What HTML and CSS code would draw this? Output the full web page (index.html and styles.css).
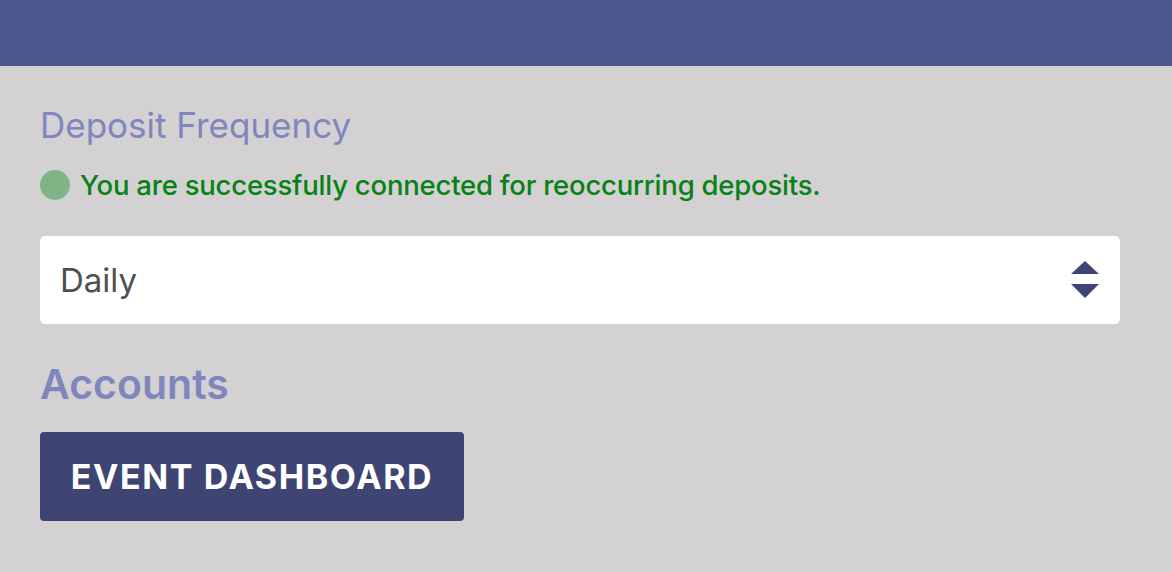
FILE: index.html
```html
<!DOCTYPE html>
<html>
<head>
<meta charset="utf-8">
<link rel="stylesheet" href="styles.css">
</head>
<body>
<header class="topbar"></header>
<main class="content">
  <h2 class="label">Deposit Frequency</h2>
  <p class="status"><span class="dot"></span>You are successfully connected for reoccurring deposits.</p>
  <div class="select">
    <span class="select-value">Daily</span>
    <svg class="arrows" width="30" height="38" viewBox="0 0 30 38">
      <polygon points="15,0 29,13 1,13" fill="#3e4574"/>
      <polygon points="1,23 29,23 15,37" fill="#3e4574"/>
    </svg>
  </div>
  <h2 class="heading">Accounts</h2>
  <button class="btn">EVENT DASHBOARD</button>
</main>
</body>
</html>
```
FILE: styles.css
```css
html, body { margin: 0; padding: 0; }
body {
  background: #d3d1d2;
  font-family: Inter, "Liberation Sans", sans-serif;
  width: 1172px;
  height: 572px;
  overflow: hidden;
}
.topbar {
  height: 66px;
  background: #4f578f;
}
.content {
  padding: 38px 52px 0 40px;
  display: flex;
  flex-direction: column;
  align-items: flex-start;
}
.label {
  margin: 0;
  font-weight: 400;
  font-size: 35px;
  line-height: 42px;
  color: #7f86bd;
}
.status {
  margin: 23px 0 0;
  display: flex;
  align-items: center;
  font-size: 27.5px;
  font-weight: 500;
  letter-spacing: -0.22px;
  line-height: 32px;
  color: #0a8116;
}
.dot {
  width: 30px;
  height: 30px;
  border-radius: 50%;
  background: #80b486;
  margin-right: 10px;
}
.select {
  margin-top: 35px;
  align-self: stretch;
  height: 88px;
  background: #fff;
  border-radius: 5px;
  display: flex;
  align-items: center;
  justify-content: space-between;
  padding: 0 20px;
  box-sizing: border-box;
}
.select-value {
  font-size: 33px;
  color: #505050;
}
.arrows { display: block; }
.heading {
  margin: 36px 0 0;
  font-size: 41px;
  font-weight: 600;
  line-height: 48px;
  color: #7f86bd;
}
.btn {
  margin-top: 24px;
  width: 424px;
  height: 89px;
  border: 0;
  border-radius: 4px;
  background: #3e4573;
  color: #fff;
  font-family: Inter, "Liberation Sans", sans-serif;
  font-size: 34px;
  font-weight: 700;
  letter-spacing: 1.6px;
  padding: 0;
}
```
